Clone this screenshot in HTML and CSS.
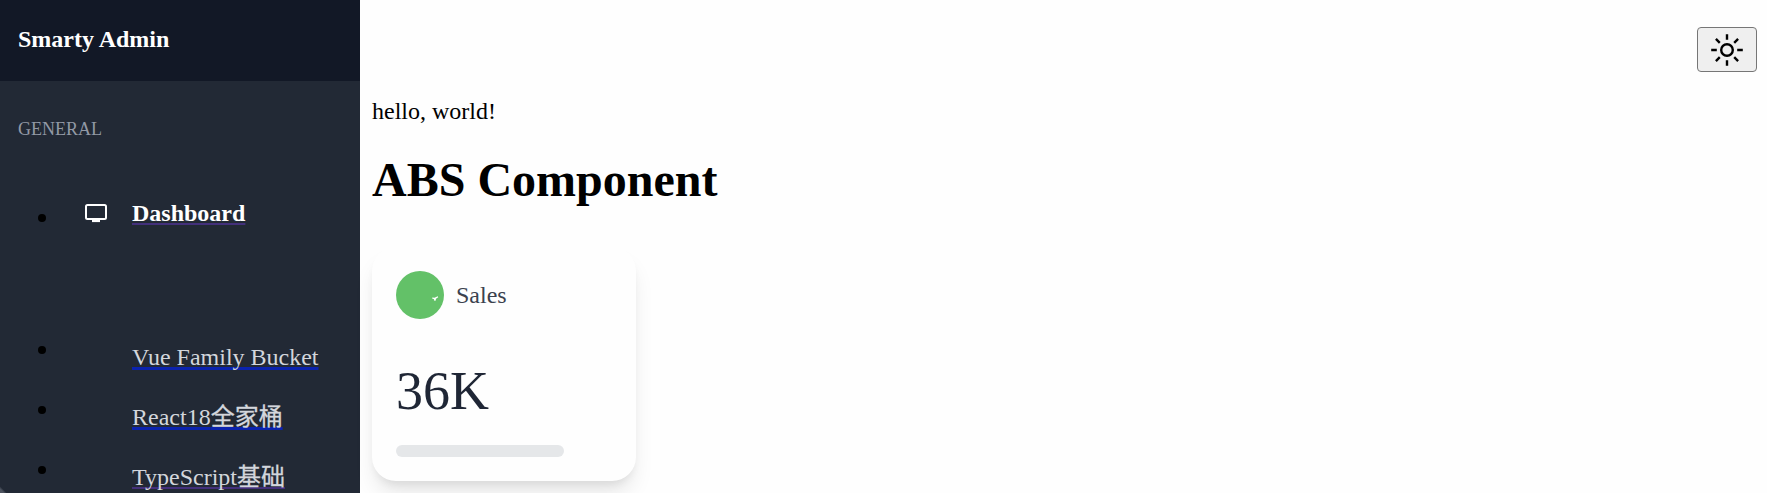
FILE: index.html
```html
<!DOCTYPE html>
<html lang="en">
<head>
<meta charset="utf-8">
<title>Smarty Admin</title>
<link rel="stylesheet" href="styles.css">
</head>
<body>
<div class="app">
  <aside class="sidebar">
    <div class="brand">Smarty Admin</div>
    <p class="section">GENERAL</p>
    <ul class="menu">
      <li class="item item-active">
        <svg class="item-icon" width="24" height="20" viewBox="0 0 24 20" fill="none" stroke="currentColor" stroke-width="2"><rect x="2" y="2" width="20" height="14" rx="1.5"/><path d="M8 17.8h8" stroke-width="2.6"/></svg>
        <a class="link visited" href="#"><span>Dashboard</span></a>
      </li>
      <li class="item"><a class="link" href="#"><span>Vue Family Bucket</span></a></li>
      <li class="item"><a class="link" href="#"><span>React18<span class="cjk">全家桶</span></span></a></li>
      <li class="item"><a class="link visited" href="#"><span>TypeScript<span class="cjk">基础</span></span></a></li>
    </ul>
  </aside>
  <main class="main">
    <div class="toolbar">
      <button class="theme" aria-label="Theme">
        <svg width="36" height="36" viewBox="0 0 36 36" fill="none" stroke="#000" stroke-width="2.4"><circle cx="18" cy="18" r="5.8"/><path d="M18 2.2v5.6M18 28.2v5.6M2.2 18h5.6M28.2 18h5.6M6.9 6.9l3.9 3.9M25.2 25.2l3.9 3.9M29.1 6.9l-3.9 3.9M10.8 25.2l-3.9 3.9"/></svg>
      </button>
    </div>
    <p class="hello">hello, world!</p>
    <h1 class="title">ABS Component</h1>
    <section class="card">
      <div class="card-head">
        <span class="badge"><svg width="48" height="48" viewBox="0 0 48 48" fill="#fff"><path d="M36.3 26.4l2.2.3 3.3-1.4.4 1-2.2 1.5-.4 2-1.7-.2.2-1.4-2-.8z"/></svg></span>
        <span class="label">Sales</span>
      </div>
      <p class="value">36K</p>
      <div class="bar"></div>
    </section>
  </main>
</div>
</body>
</html>
```
FILE: styles.css
```css
* { box-sizing: border-box; }
body {
  margin: 0;
  overflow: hidden;
  background: #fefefe;
  color: #000;
  font: 24px/36px "Liberation Serif", "Noto Sans CJK SC", serif;
}
p, h1, ul { margin: 0; padding: 0; }
.app { display: flex; height: 493px; overflow: hidden; }
.sidebar {
  width: 360px;
  flex: none;
  overflow: hidden;
  background: linear-gradient(45deg, #4d535f 3px, #222935 5px);
}
.brand { height: 81px; padding: 21px 18px; background: #121826; color: #fff; font-weight: bold; }
.section { padding: 35px 18px 0; font-size: 18px; line-height: 27px; color: #9299a6; }
.menu { list-style: none; padding: 52px 0 0 38px; }
.item { display: flex; height: 60px; color: #d3d6dc; }
.item::before {
  content: "";
  flex: none;
  width: 8px;
  height: 8px;
  margin: 6.5px 86px 0 0;
  border-radius: 50%;
  background: #000;
}
.item-active { height: 144px; color: #fff; font-weight: bold; }
.item-active::before { margin: 18.5px 38px 0 0; }
.item-icon { flex: none; margin: 8px 24px 0 0; }
.link {
  height: 36px;
  color: #0b23ae;
  white-space: nowrap;
  text-decoration: underline;
  text-decoration-thickness: 3px;
  text-underline-offset: 1.5px;
  text-decoration-skip-ink: none;
}
.link span { color: #d3d6dc; }
.cjk { -webkit-text-stroke: 0.3px #d3d6dc; }
.visited { color: #43307b; text-decoration-thickness: 2px; text-underline-offset: 2px; }
.item-active .link span { color: #fff; }
.main { flex: 1; padding: 27px 10px 0 12px; }
.toolbar { display: flex; justify-content: flex-end; height: 66px; }
.theme {
  display: flex;
  align-items: center;
  justify-content: center;
  width: 60px;
  height: 45px;
  padding: 0;
  border: 1px solid #767676;
  border-radius: 4px;
  background: #efefef;
}
.title { margin: 24px 0 40px; font-size: 48px; line-height: 54px; }
.card {
  width: 264px;
  height: 234px;
  padding: 24px;
  border-radius: 24px;
  background: #fefefe;
  box-shadow: 0 15px 22px -4px rgba(0, 0, 0, .1), 0 6px 9px -3px rgba(0, 0, 20, .07);
}
.card-head { display: flex; align-items: center; gap: 12px; }
.badge { display: flex; width: 48px; height: 48px; border-radius: 50%; background: #63c168; }
.label { color: #3b424e; }
.value { margin: 42px 0 24px; font-size: 54px; line-height: 60px; color: #1f2635; }
.bar { width: 168px; height: 12px; border-radius: 6px; background: #e5e7e9; }
```
